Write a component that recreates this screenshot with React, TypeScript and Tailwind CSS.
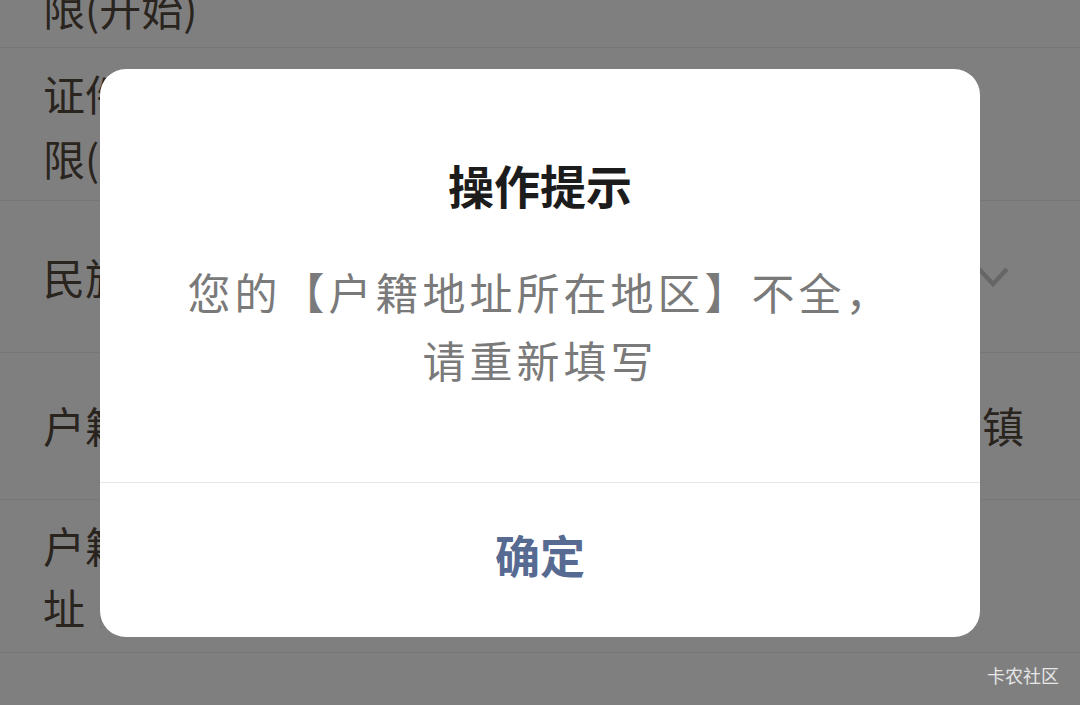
import React from "react";

const font = { fontFamily: '"Noto Sans CJK SC", "Noto Sans", sans-serif' };

export default function App() {
  return (
    <div className="relative w-[1080px] h-[705px] overflow-hidden bg-white" style={font}>
      {/* underlying form */}
      <div className="flex flex-col text-[42px] text-[#54493e]">
        <div className="-mt-[102px] h-[150px] border-b border-[#eeeeee] pl-[43px] pt-[12px] leading-[65px]">
          <div>证件有效期</div>
          <div>限(开始)</div>
        </div>
        <div className="h-[153px] border-b border-[#eeeeee] pl-[43px] pt-[12px] leading-[65px]">
          <div>证件有效期</div>
          <div>限(结束)</div>
        </div>
        <div className="h-[152px] border-b border-[#eeeeee] pl-[43px] pr-[70px] pt-[44px] leading-[64px] flex justify-between">
          <div>民族</div>
          <svg width="34" height="24" viewBox="0 0 34 24" className="mt-[20px]">
            <path d="M3 4 L17 19 L31 4" fill="none" stroke="#cccccc" strokeWidth="4.5" />
          </svg>
        </div>
        <div className="h-[147px] border-b border-[#eeeeee] pl-[43px] pr-[56px] pt-[40px] leading-[64px] flex justify-between">
          <div>户籍所在地区</div>
          <div>湖南省长沙市乔口镇</div>
        </div>
        <div className="h-[153px] border-b border-[#eeeeee] pl-[43px] pt-[14px] leading-[62px]">
          <div>户籍地</div>
          <div className="flex items-center">
            <span>址</span>
            <span className="inline-block w-px h-[44px] bg-[#eeeeee] ml-[15px]" />
          </div>
        </div>
      </div>

      {/* mask */}
      <div className="absolute inset-0 bg-[rgba(0,0,0,0.5)] flex items-center justify-center">
        <div className="w-[880px] bg-white rounded-[26px] overflow-hidden flex flex-col">
          <div className="pt-[85px] pb-[89px] border-b border-[#e6e6e6] flex flex-col items-center">
            <div className="text-[46px] leading-[60px] font-bold text-[#1c1c1c]">操作提示</div>
            <div className="mt-[43px] text-[43px] leading-[68px] tracking-[4px] text-[#7a7a7a] text-center">
              您的【户籍地址所在地区】不全，
              <br />
              请重新填写
            </div>
          </div>
          <div className="h-[154px] pb-[9px] flex items-center justify-center text-[45px] font-bold text-[#576a92]">
            确定
          </div>
        </div>
      </div>

      {/* watermark */}
      <div className="absolute right-[21px] bottom-[17px] text-[18px] leading-[26px] text-[#e6e6e6]">卡农社区</div>
    </div>
  );
}
